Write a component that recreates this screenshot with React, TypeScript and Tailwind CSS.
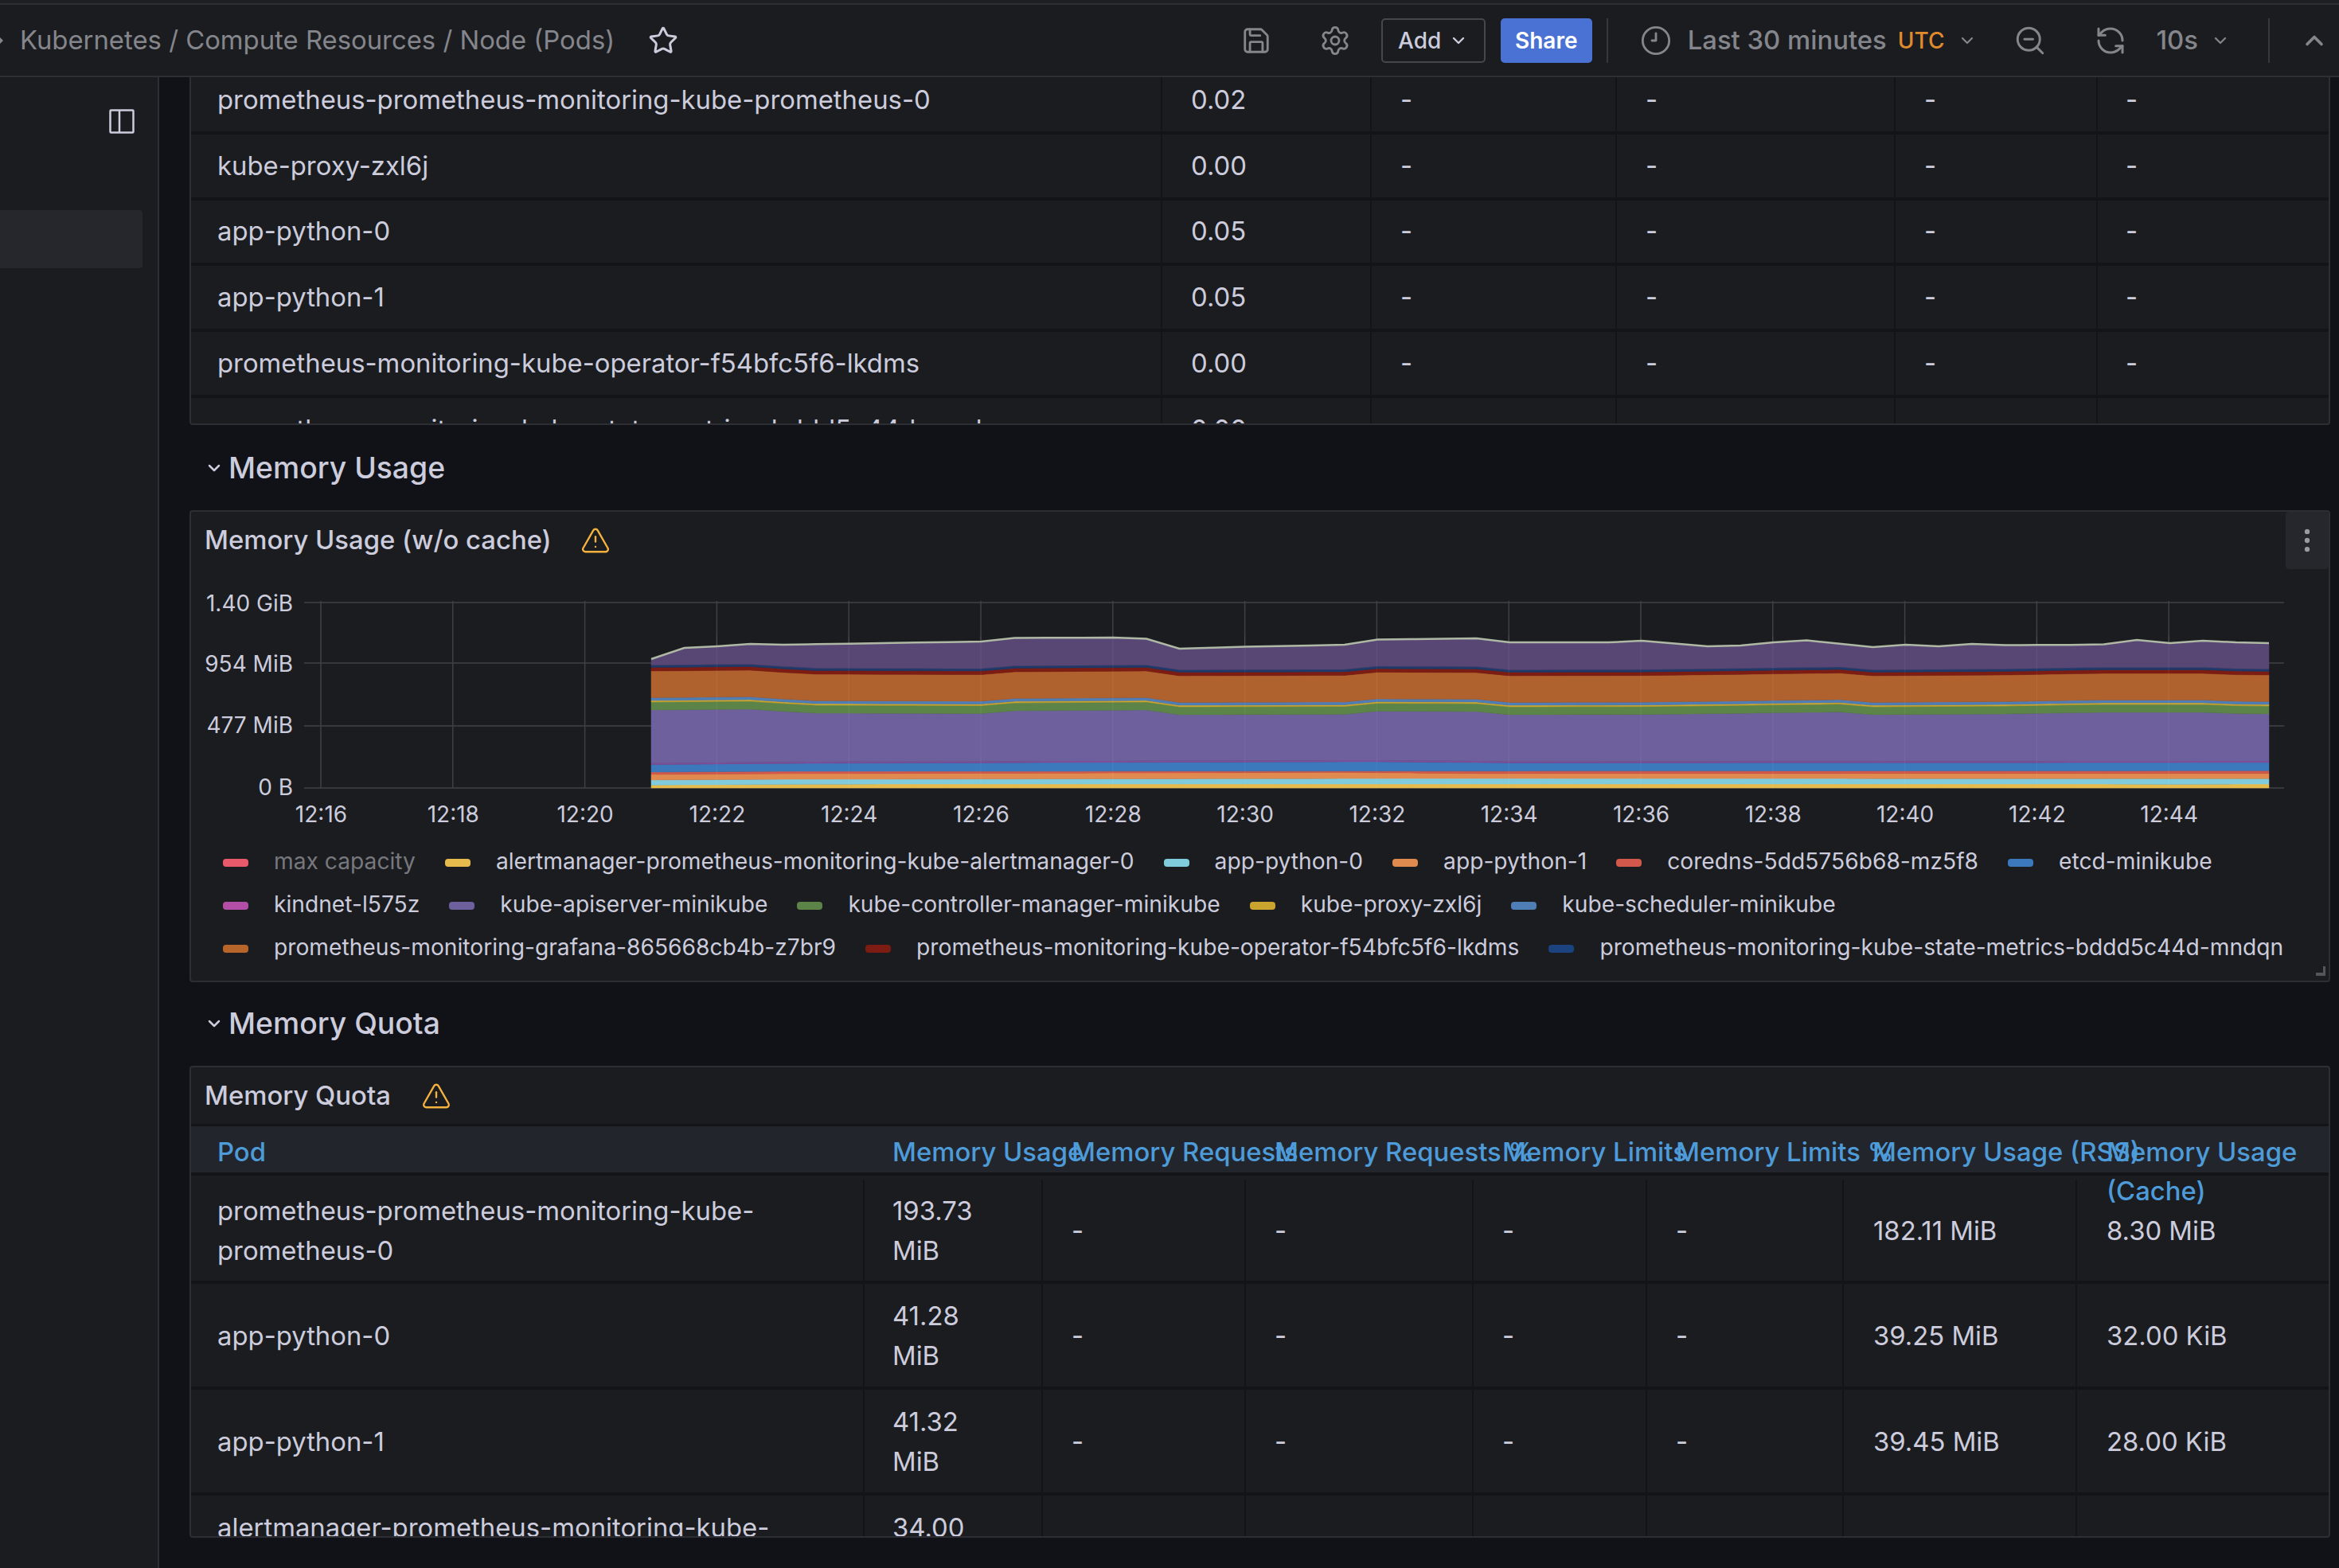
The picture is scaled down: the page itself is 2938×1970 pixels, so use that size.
import { ChevronDown, ChevronUp, EllipsisVertical, RefreshCcw, Save, Settings, Star, TriangleAlert, ZoomOut } from "lucide-react";

type Key = [number, number];
const interp = (keys: Key[], x: number) => {
  if (x <= keys[0][0]) return keys[0][1];
  for (let i = 1; i < keys.length; i++) {
    if (x <= keys[i][0]) {
      const [x0, y0] = keys[i - 1];
      const [x1, y1] = keys[i];
      return y0 + ((y1 - y0) * (x - x0)) / (x1 - x0);
    }
  }
  return keys[keys.length - 1][1];
};

const xs = Array.from({ length: 50 }, (_, i) => 818 + (2032 / 49) * i);

const topKeys: Key[] = [[818,829],[859,815],[900,813],[942,810],[983,811],[1233,807],[1272,802.5],[1400,802],[1440,803.5],[1481,816],[1565,813.5],[1690,811],[1730,804.5],[1855,803],[1896,808],[2022,808],[2061,806],[2145,813],[2185,812],[2227,808],[2268,805.5],[2352,814],[2393,811],[2435,813],[2476,810],[2517,811.5],[2640,811],[2684,805],[2725,809],[2767,806],[2808,808],[2850,809]];
const apKeys: Key[] = [[818,893],[942,892],[1018,897],[1233,897.5],[1275,894],[1440,893],[1481,899],[1690,898.5],[1730,894.5],[1855,895],[1896,899],[2060,898.7],[2200,897],[2310,895.5],[2352,899],[2520,898],[2640,896],[2780,896],[2815,898],[2850,898]];
const etcdKeys: Key[] = [[818,961.7],[1000,960],[1730,958],[1900,959.5],[2850,959]];

const ap = (x: number) => interp(apKeys, x);
const etcd = (x: number) => interp(etcdKeys, x);

const bands: { color: string; f: (x: number) => number }[] = [
  { color: "#e5bb4e", f: (x) => interp([[818,987.3],[1100,986],[2650,986],[2700,986.5],[2850,986]], x) },
  { color: "#80cbdc", f: (x) => interp([[818,981],[1000,980],[1800,979],[2850,979.3]], x) },
  { color: "#e08a50", f: (x) => interp([[818,974],[1000,973],[1700,971.5],[1850,972.8],[2850,972.7]], x) },
  { color: "#d1584a", f: (x) => interp([[818,971],[1000,970],[2850,969.3]], x) },
  { color: "#3c78bc", f: etcd },
  { color: "#7d4f98", f: (x) => etcd(x) - 2 },
  { color: "#6e5f9d", f: ap },
  { color: "#5c8449", f: (x) => ap(x) - 10 },
  { color: "#c9a52f", f: (x) => ap(x) - 12 },
  { color: "#4f7eb6", f: (x) => ap(x) - 15.5 },
  { color: "#b0622e", f: (x) => ap(x) - 49 },
  { color: "#7d1c12", f: (x) => ap(x) - 53.5 },
  { color: "#1f3a6a", f: (x) => ap(x) - 56.5 },
  { color: "#584674", f: (x) => interp(topKeys, x) },
];

const fmt = (n: number) => n.toFixed(1);
const polys = bands.map((b, i) => {
  const lower = i === 0 ? xs.map((x) => [x, 991]) : xs.map((x) => [x, bands[i - 1].f(x)]);
  const upper = xs.map((x) => [x, b.f(x)]);
  return { color: b.color, points: [...upper, ...lower.reverse()].map(([x, y]) => `${fmt(x)},${fmt(y)}`).join(" ") };
});
const topLine = xs.map((x) => `${fmt(x)},${fmt(interp(topKeys, x))}`).join(" ");

const timeLabels = ["12:16","12:18","12:20","12:22","12:24","12:26","12:28","12:30","12:32","12:34","12:36","12:38","12:40","12:42","12:44"];
const timeX = timeLabels.map((_, i) => 403 + 165.8 * i);
const yGrid = [
  { label: "1.40 GiB", y: 758, ty: 759 },
  { label: "954 MiB", y: 834, ty: 835 },
  { label: "477 MiB", y: 913, ty: 912 },
  { label: "0 B", y: 991, ty: 990 },
];

function Chart() {
  return (
    <svg viewBox="240 718 2685 338" width={2685} height={338} className="block">
      {yGrid.map((g) => (
        <line key={g.y} x1={382} x2={2869} y1={g.y} y2={g.y} stroke="#36383d" strokeWidth={2} />
      ))}
      {timeX.map((x) => (
        <line key={x} x1={x} x2={x} y1={756} y2={991} stroke="#3f4145" strokeWidth={1.5} />
      ))}
      {polys.map((p) => (
        <polygon key={p.color} points={p.points} fill={p.color} stroke={p.color} strokeWidth={0.5} />
      ))}
      {timeX.filter((x) => x > 818).map((x) => (
        <line key={x} x1={x} x2={x} y1={800} y2={991} stroke="#ffffff" strokeOpacity={0.05} strokeWidth={1.5} />
      ))}
      <polyline points={topLine} fill="none" stroke="#aeb8a4" strokeWidth={2.5} />
      <g fill="#ccccdc" fontSize={28} fontFamily="Inter, sans-serif">
        {yGrid.map((g) => (
          <text key={g.label} x={368} y={g.ty} textAnchor="end" dominantBaseline="central">
            {g.label}
          </text>
        ))}
        {timeLabels.map((t, i) => (
          <text key={t} x={timeX[i] + 0.5} y={1024} textAnchor="middle" dominantBaseline="central">
            {t}
          </text>
        ))}
      </g>
    </svg>
  );
}

function SectionHead({ title, h }: { title: string; h: string }) {
  return (
    <div className={`flex items-center ${h}`}>
      <ChevronDown size={24} strokeWidth={2.5} className="ml-[19px] mr-[6px] text-[#ccccdc]" />
      <span className="text-[37.33px] font-medium text-[#ccccdc]">{title}</span>
    </div>
  );
}

function Warn() {
  return <TriangleAlert size={38} strokeWidth={1.5} className="text-[#f5b13d]" />;
}

const cpuRows = [
  ["prometheus-prometheus-monitoring-kube-prometheus-0", "0.02"],
  ["kube-proxy-zxl6j", "0.00"],
  ["app-python-0", "0.05"],
  ["app-python-1", "0.05"],
  ["prometheus-monitoring-kube-operator-f54bfc5f6-lkdms", "0.00"],
  ["prometheus-monitoring-kube-state-metrics-bddd5c44d-mndqn", "0.00"],
];

function CpuTable() {
  return (
    <div className="h-[437px] overflow-hidden rounded-b-[4px] border-x-2 border-b-2 border-[#2c2e33] bg-[#1a1c20]">
      <div className="-mt-[11px]">
        {cpuRows.map(([pod, v]) => (
          <div key={pod} className="flex h-[82.8px] border-b-4 border-[#121418] text-[32.85px] text-[#ccccdc]">
            <div className="flex w-[1218px] items-center whitespace-nowrap pl-[33px]">{pod}</div>
            <div className="flex w-[263px] items-center border-l-2 border-[#121418] pl-[36px]">{v}</div>
            <div className="flex w-[308px] items-center border-l-2 border-[#121418] pl-[36px]">-</div>
            <div className="flex w-[350px] items-center border-l-2 border-[#121418] pl-[36px]">-</div>
            <div className="flex w-[254px] items-center border-l-2 border-[#121418] pl-[36px]">-</div>
            <div className="flex flex-1 items-center border-l-2 border-[#121418] pl-[35px]">-</div>
          </div>
        ))}
      </div>
    </div>
  );
}

const legendRows: [string, string, boolean?][][] = [
  [["#e8596a", "max capacity", true], ["#e5bb4e", "alertmanager-prometheus-monitoring-kube-alertmanager-0"], ["#80cbdc", "app-python-0"], ["#e08a50", "app-python-1"], ["#d1584a", "coredns-5dd5756b68-mz5f8"], ["#3c78bc", "etcd-minikube"]],
  [["#b24ea6", "kindnet-l575z"], ["#6e5f9d", "kube-apiserver-minikube"], ["#5c8449", "kube-controller-manager-minikube"], ["#c9a52f", "kube-proxy-zxl6j"], ["#4f7eb6", "kube-scheduler-minikube"]],
  [["#b8652c", "prometheus-monitoring-grafana-865668cb4b-z7br9"], ["#7d1c12", "prometheus-monitoring-kube-operator-f54bfc5f6-lkdms"], ["#1a4380", "prometheus-monitoring-kube-state-metrics-bddd5c44d-mndqn"]],
];

function Legend() {
  return (
    <div className="pl-[40px]">
      {legendRows.map((row, i) => (
        <div key={i} className="flex h-[54px] items-center gap-[37px] whitespace-nowrap text-[28.2px]">
          {row.map(([color, label, off]) => (
            <div key={label} className="flex items-center">
              <span className="mr-[32px] mt-[5px] h-[10px] w-[32px] rounded-[4px]" style={{ backgroundColor: color }} />
              <span className={off ? "text-[#77787e]" : "text-[#ccccdc]"}>{label}</span>
            </div>
          ))}
        </div>
      ))}
    </div>
  );
}

function UsagePanel() {
  return (
    <div className="relative h-[593px] overflow-hidden rounded-[4px] border-2 border-[#2c2e33] bg-[#1a1c20]">
      <div className="mb-[2px] flex h-[72px] items-center pl-[17px]">
        <span className="text-[32.85px] font-medium text-[#ccccdc]">Memory Usage (w/o cache)</span>
        <span className="ml-[36px]"><Warn /></span>
      </div>
      <Chart />
      <Legend />
      <div className="absolute right-0 top-0 flex h-[72px] w-[54px] items-center justify-center rounded-[4px] bg-[#25272d]">
        <EllipsisVertical size={38} strokeWidth={2} className="text-[#9a9ba1]" />
      </div>
      <svg width="12" height="12" viewBox="0 0 12 12" className="absolute bottom-[6px] right-[4px]">
        <path d="M9 0h3v12H0V8h9z" fill="#55565b" />
      </svg>
    </div>
  );
}

const colW = ["w-[846px]", "w-[224px]", "w-[255px]", "w-[286px]", "w-[218px]", "w-[247px]", "w-[293px]", "flex-1"];
const quotaHead = ["Pod", "Memory Usage", "Memory Requests", "Memory Requests %", "Memory Limits", "Memory Limits %", "Memory Usage (RSS)"];
const quotaRows: { pod: string; use: string; rss: string; cache: string; h: string }[] = [
  { pod: "prometheus-prometheus-monitoring-kube-prometheus-0", use: "193.73 MiB", rss: "182.11 MiB", cache: "8.30 MiB", h: "mt-[5px] h-[131px]" },
  { pod: "app-python-0", use: "41.28 MiB", rss: "39.25 MiB", cache: "32.00 KiB", h: "h-[133px]" },
  { pod: "app-python-1", use: "41.32 MiB", rss: "39.45 MiB", cache: "28.00 KiB", h: "h-[133px]" },
  { pod: "alertmanager-prometheus-monitoring-kube-prometheus-0", use: "34.00 MiB", rss: "", cache: "", h: "h-[133px]" },
];

function QuotaPanel() {
  return (
    <div className="h-[593px] overflow-hidden rounded-[4px] border-2 border-[#2c2e33] bg-[#1a1c20]">
      <div className="flex h-[74px] items-center border-b-[3px] border-[#121418] pl-[17px]">
        <span className="text-[32.85px] font-medium text-[#ccccdc]">Memory Quota</span>
        <span className="ml-[38px]"><Warn /></span>
      </div>
      <div className="relative z-10 flex h-[62px] border-b-4 border-[#121418] bg-[#22252b] text-[32.85px] font-medium leading-[49px] text-[#4e9bd9]">
        {quotaHead.map((h, i) => (
          <div key={h} className={`${colW[i]} shrink-0 whitespace-nowrap pt-[8px] ${i === 0 ? "pl-[33px]" : i === 1 ? "pl-[35px]" : "pl-[36px]"}`}>
            {h}
          </div>
        ))}
        <div className="flex-1 pl-[37px] pt-[8px]">Memory Usage (Cache)</div>
      </div>
      {quotaRows.map((r) => {
        const cell = "flex items-center border-r-2 border-[#121418] shrink-0";
        const dash = r.rss === "" ? "" : "-";
        return (
          <div key={r.pod} className={`flex border-b-4 border-[#121418] text-[32.85px] leading-[50px] text-[#ccccdc] ${r.h}`}>
            <div className={`${cell} w-[846px] pl-[33px] pr-[33px]`}>{r.pod}</div>
            <div className={`${cell} w-[224px] pl-[35px] pr-[60px]`}>{r.use}</div>
            <div className={`${cell} w-[255px] pl-[36px]`}>{dash}</div>
            <div className={`${cell} w-[286px] pl-[36px]`}>{dash}</div>
            <div className={`${cell} w-[218px] pl-[36px]`}>{dash}</div>
            <div className={`${cell} w-[247px] pl-[36px]`}>{dash}</div>
            <div className={`${cell} w-[293px] pl-[37px]`}>{r.rss}</div>
            <div className="flex flex-1 items-center pl-[37px]">{r.cache}</div>
          </div>
        );
      })}
    </div>
  );
}

function Header() {
  const icon = "text-[#85868c] shrink-0";
  return (
    <div className="shrink-0 bg-[#1a1c20]">
      <div className="h-[6px] border-b-2 border-[#2c2e33] bg-[#1d1f23]" />
      <div className="flex h-[91px] items-center border-b-2 border-[#2c2e33] pr-[13px] text-[#85868c]">
        <svg width="4" height="12" viewBox="0 0 4 12" className="shrink-0"><path d="M0 2l4 4-4 4z" fill="#85868c" /></svg>
        <span className="ml-[21px] whitespace-nowrap text-[32.85px]">Kubernetes / Compute Resources / Node (Pods)</span>
        <Star size={38} strokeWidth={1.9} className="ml-[42px] shrink-0 text-[#ccccdc]" />
        <div className="flex-1" />
        <Save size={38} strokeWidth={1.8} className={icon} />
        <Settings size={40} strokeWidth={1.7} className={`${icon} ml-[60px]`} />
        <div className="ml-[38px] flex h-[56px] w-[131px] items-center justify-center gap-[10px] rounded-[5px] border-2 border-[#45474d] text-[28px] font-medium text-[#ccccdc]">
          Add
          <ChevronDown size={24} strokeWidth={2.4} />
        </div>
        <div className="ml-[19px] flex h-[56px] w-[115px] items-center justify-center rounded-[5px] bg-[#4a72d4] text-[28px] font-semibold text-white">Share</div>
        <div className="ml-[18px] h-[56px] w-[2px] bg-[#36383d]" />
        <svg width="40" height="40" viewBox="0 0 24 24" fill="none" stroke="currentColor" strokeWidth="1.7" strokeLinecap="round" strokeLinejoin="round" className={`${icon} ml-[40px]`}>
          <circle cx="12" cy="12" r="10" />
          <path d="M12 6.5V12H9" />
        </svg>
        <span className="ml-[20px] whitespace-nowrap text-[32.85px] font-medium">Last 30 minutes</span>
        <span className="ml-[14px] text-[28px] font-medium text-[#e08a2e]">UTC</span>
        <ChevronDown size={24} strokeWidth={2.2} className="ml-[16px] shrink-0" />
        <ZoomOut size={42} strokeWidth={1.7} className={`${icon} ml-[46px]`} />
        <RefreshCcw size={40} strokeWidth={1.8} className={`${icon} ml-[60px]`} />
        <span className="ml-[38px] text-[32.85px] font-medium">10s</span>
        <ChevronDown size={24} strokeWidth={2.2} className="ml-[16px] shrink-0" />
        <div className="ml-[48px] h-[56px] w-[2px] bg-[#36383d]" />
        <ChevronUp size={36} strokeWidth={2.4} className="ml-[38px] shrink-0" />
      </div>
    </div>
  );
}

function Sidebar() {
  return (
    <div className="w-[200px] shrink-0 border-r-2 border-[#2c2e33] bg-[#1a1c20] pt-[40px]">
      <svg width="32" height="31" viewBox="0 0 32 31" fill="none" stroke="#ccccdc" strokeWidth="2.5" className="ml-[137px] block">
        <rect x="1.5" y="1.5" width="29" height="28" rx="1" />
        <path d="M13 1.5v28" />
      </svg>
      <div className="mr-[19px] mt-[96px] h-[73px] rounded-r-[4px] bg-[#25272d]" />
    </div>
  );
}

export default function App() {
  return (
    <div className="flex h-[1970px] w-[2938px] flex-col overflow-hidden bg-[#101217] font-[Inter,sans-serif]">
      <Header />
      <div className="flex min-h-0 flex-1">
        <Sidebar />
        <div className="min-w-0 flex-1 pl-[38px] pr-[11px]">
          <CpuTable />
          <SectionHead title="Memory Usage" h="h-[107px]" />
          <UsagePanel />
          <SectionHead title="Memory Quota" h="h-[105px] pb-[1px]" />
          <QuotaPanel />
        </div>
      </div>
    </div>
  );
}
